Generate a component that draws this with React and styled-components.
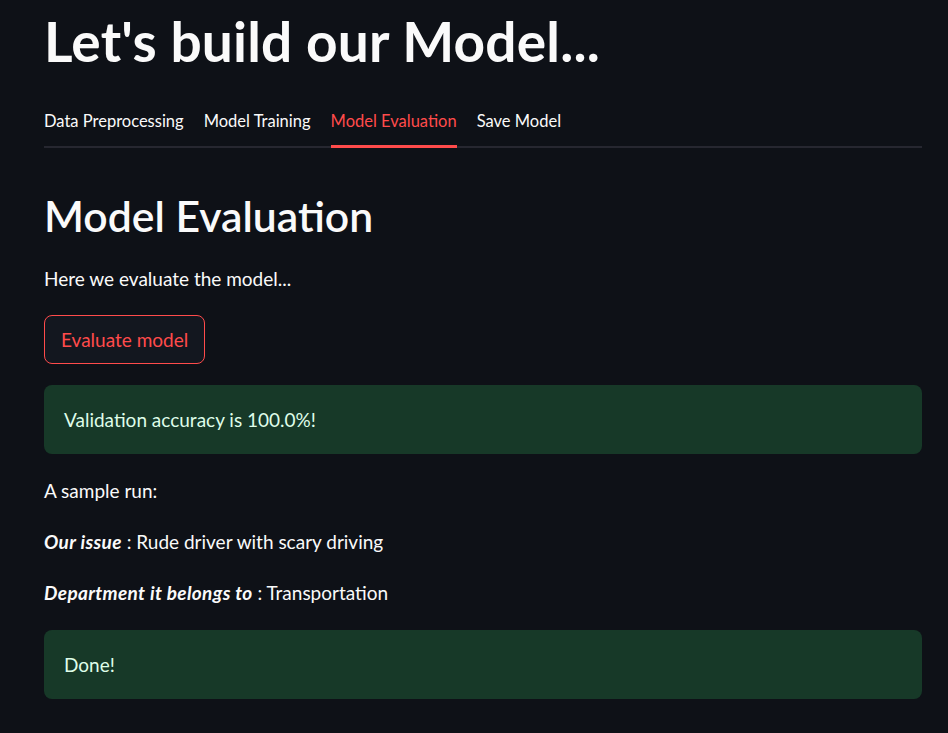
import React from "react";
import styled, { createGlobalStyle } from "styled-components";

const Global = createGlobalStyle`
  html, body { margin: 0; padding: 0; background: #0e1117; }
  body { font-family: Lato, "Noto Sans", sans-serif; color: #fafafa; }
`;

const Page = styled.div`
  width: 948px;
  min-height: 733px;
  box-sizing: border-box;
  padding: 8px 26px 0 44px;
  display: flex;
  flex-direction: column;
`;

const Title = styled.h1`
  margin: 0;
  font-size: 55px;
  font-weight: 700;
  line-height: 66px;
  letter-spacing: 0.2px;
`;

const TabBar = styled.div`
  display: flex;
  gap: 20px;
  margin-top: 35px;
  border-bottom: 2px solid #262730;
`;

const Tab = styled.div`
  font-size: 16.5px;
  line-height: 24px;
  padding-bottom: 12px;
  color: ${(p) => (p.$active ? "#ff4b4b" : "#fafafa")};
  border-bottom: 3px solid ${(p) => (p.$active ? "#ff4b4b" : "transparent")};
  margin-bottom: -2px;
`;

const Heading = styled.h2`
  margin: 42px 0 0;
  font-size: 42.7px;
  font-weight: 600;
  line-height: 52px;
`;

const Para = styled.p`
  margin: ${(p) => p.$mt || 0}px 0 0;
  font-size: 19px;
  line-height: 28px;
`;

const Emph = styled.strong`
  font-style: italic;
  font-weight: 700;
  letter-spacing: 0.35px;
`;

const Button = styled.button`
  align-self: flex-start;
  margin-top: 22px;
  height: 49px;
  padding: 0 16px;
  background: #13171f;
  border: 1px solid #ff4b4b;
  border-radius: 8px;
  color: #ff4b4b;
  font-family: inherit;
  font-size: 19px;
`;

const Alert = styled.div`
  margin-top: ${(p) => p.$mt}px;
  height: 69px;
  box-sizing: border-box;
  display: flex;
  align-items: center;
  padding: 0 20px;
  background: #173928;
  border-radius: 8px;
  color: #dffde9;
  font-size: 19px;
`;

export default function App() {
  return (
    <>
      <Global />
      <Page>
        <Title>Let's build our Model...</Title>
        <TabBar>
          <Tab>Data Preprocessing</Tab>
          <Tab>Model Training</Tab>
          <Tab $active>Model Evaluation</Tab>
          <Tab>Save Model</Tab>
        </TabBar>
        <Heading>Model Evaluation</Heading>
        <Para $mt={23}>Here we evaluate the model...</Para>
        <Button>Evaluate model</Button>
        <Alert $mt={21}>Validation accuracy is 100.0%!</Alert>
        <Para $mt={23}>A sample run:</Para>
        <Para $mt={23}>
          <Emph>Our issue</Emph> : Rude driver with scary driving
        </Para>
        <Para $mt={23}>
          <Emph>Department it belongs to</Emph> : Transportation
        </Para>
        <Alert $mt={23}>Done!</Alert>
      </Page>
    </>
  );
}
